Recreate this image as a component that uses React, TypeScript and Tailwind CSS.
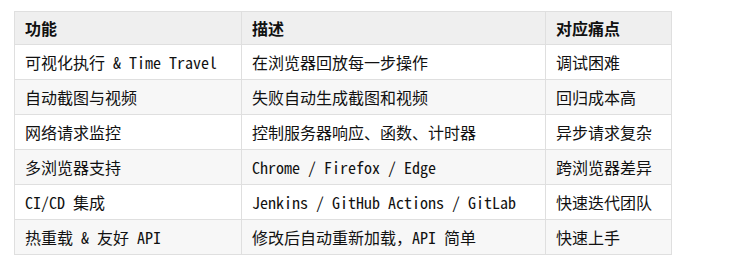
const rows: Array<[string, string, string]> = [
  ["可视化执行 & Time Travel", "在浏览器回放每一步操作", "调试困难"],
  ["自动截图与视频", "失败自动生成截图和视频", "回归成本高"],
  ["网络请求监控", "控制服务器响应、函数、计时器", "异步请求复杂"],
  ["多浏览器支持", "Chrome / Firefox / Edge", "跨浏览器差异"],
  ["CI/CD 集成", "Jenkins / GitHub Actions / GitLab", "快速迭代团队"],
  ["热重载 & 友好 API", "修改后自动重新加载，API 简单", "快速上手"],
];

export default function App() {
  return (
    <div className="h-[267px] w-[752px] bg-white pl-[14px] pt-[11px]">
      <table
        className="w-[657px] table-fixed border-collapse text-[16px] text-[#111]"
        style={{ fontFamily: '"Noto Sans Mono CJK SC", "Liberation Mono", "Noto Sans CJK SC", monospace' }}
      >
        <colgroup>
          <col className="w-[227px]" />
          <col className="w-[304px]" />
          <col className="w-[126px]" />
        </colgroup>
        <thead>
          <tr className="h-[33px] bg-[#efefef]">
            {["功能", "描述", "对应痛点"].map((h) => (
              <th
                key={h}
                className="border border-[#dfdfdf] px-[10px] py-0 text-left font-bold leading-none"
              >
                {h}
              </th>
            ))}
          </tr>
        </thead>
        <tbody>
          {rows.map((r, i) => (
            <tr key={r[0]} className={i % 2 === 1 ? "h-[35px] bg-[#f7f7f7]" : "h-[35px] bg-white"}>
              {r.map((c, j) => (
                <td
                  key={j}
                  className="whitespace-nowrap border border-[#dfdfdf] px-[10px] py-0 leading-none"
                >
                  {c}
                </td>
              ))}
            </tr>
          ))}
        </tbody>
      </table>
    </div>
  );
}
